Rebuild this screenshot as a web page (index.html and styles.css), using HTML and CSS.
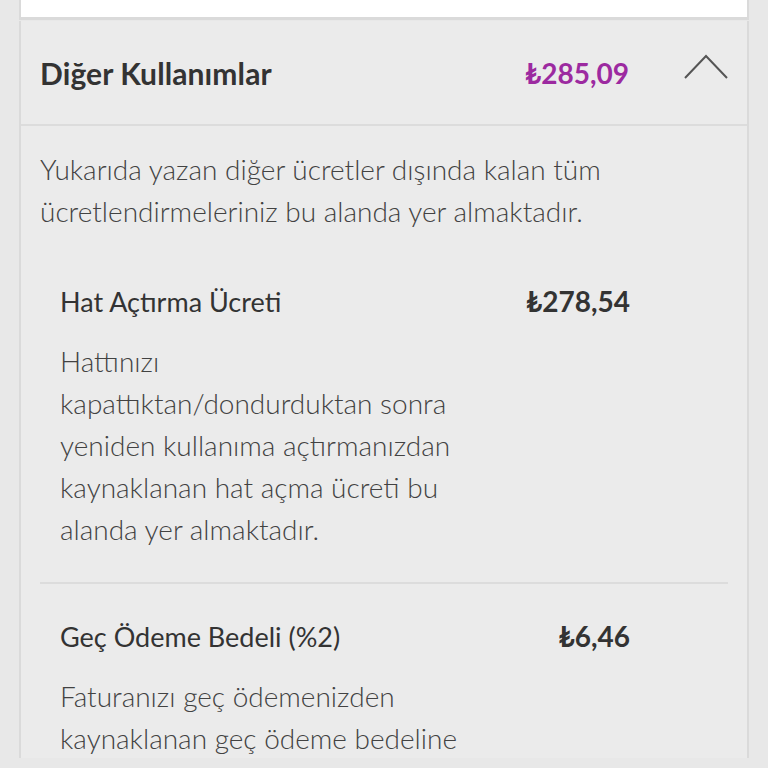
FILE: index.html
```html
<!DOCTYPE html>
<html lang="tr">
<head>
    <meta charset="UTF-8">
    <meta name="viewport" content="width=device-width, initial-scale=1.0">
    <title>Fatura Detayı</title>
    <link rel="stylesheet" href="styles.css">
</head>
<body>
    <div class="page">
        <div class="card card-top"></div>

        <div class="card accordion">
            <div class="accordion-header">
                <h2 class="accordion-title">Diğer Kullanımlar</h2>
                <span class="accordion-total">₺285,09</span>
                <svg class="chevron" width="44" height="26" viewBox="0 0 44 26" aria-hidden="true">
                    <polyline points="1,24 22,2 43,24" fill="none" stroke="#555" stroke-width="2"/>
                </svg>
            </div>

            <div class="accordion-body">
                <p class="intro">Yukarıda yazan diğer ücretler dışında kalan tüm ücretlendirmeleriniz bu alanda yer almaktadır.</p>

                <div class="charge">
                    <div class="charge-row">
                        <span class="charge-name">Hat Açtırma Ücreti</span>
                        <span class="charge-amount">₺278,54</span>
                    </div>
                    <p class="charge-desc">Hattınızı<br>kapattıktan/dondurduktan sonra yeniden kullanıma açtırmanızdan kaynaklanan hat açma ücreti bu alanda yer almaktadır.</p>
                </div>

                <div class="charge">
                    <div class="charge-row">
                        <span class="charge-name">Geç Ödeme Bedeli (%2)</span>
                        <span class="charge-amount">₺6,46</span>
                    </div>
                    <p class="charge-desc">Faturanızı geç ödemenizden kaynaklanan geç ödeme bedeline</p>
                </div>
            </div>
        </div>
    </div>
</body>
</html>
```

FILE: styles.css
```css
:root {
    --page-bg: #e8e8e8;
    --card-bg: #ebebeb;
    --card-edge: #dadada;
    --line: #dcdcdc;
    --text: #333333;
    --muted: #424242;
    --purple: #9c2aa0;
}
html, body {
    margin: 0;
    padding: 0;
    background: var(--page-bg);
    font-family: Lato, "Open Sans", sans-serif;
    color: var(--text);
}
.page {
    height: 768px;
    overflow: hidden;
    padding: 0 19px;
    margin-top: -10px;
}
.card {
    border-left: 2px solid var(--card-edge);
    border-right: 2px solid var(--card-edge);
}
.card-top {
    background: #ffffff;
    height: 27px;
    border-bottom: 3px solid var(--card-edge);
}
.accordion {
    background: var(--card-bg);
    margin-top: 1px;
}
.accordion-header {
    display: flex;
    align-items: center;
    height: 103px;
    padding: 0 19px;
    border-bottom: 2px solid var(--line);
}
.accordion-title {
    flex: 1;
    margin: 0;
    font-size: 30px;
    font-weight: 700;
    color: var(--text);
    letter-spacing: 0.1px;
}
.accordion-total {
    font-size: 28px;
    font-weight: 700;
    color: var(--purple);
}
.chevron {
    margin-left: 55px;
    margin-top: -12px;
}
.accordion-body {
    padding: 22px 19px 0;
}
.intro {
    margin: 0;
    font-size: 28px;
    font-weight: 300;
    line-height: 42px;
    color: var(--muted);
}
.charge {
    padding: 0 98px 0 20px;
    border-bottom: 2px solid var(--line);
}
.charge-row {
    display: flex;
    justify-content: space-between;
    align-items: center;
    padding-top: 48px;
    height: 42px;
}
.charge-name {
    font-size: 27px;
    font-weight: 400;
}
.charge-amount {
    font-size: 28px;
    font-weight: 700;
}
.charge-desc {
    margin: 18px 0 0;
    max-width: 405px;
    font-size: 28px;
    font-weight: 300;
    line-height: 42px;
    padding-bottom: 32px;
    color: var(--muted);
}
.charge + .charge {
    border-bottom: none;
}
.charge + .charge .charge-row {
    padding-top: 31px;
}
```
